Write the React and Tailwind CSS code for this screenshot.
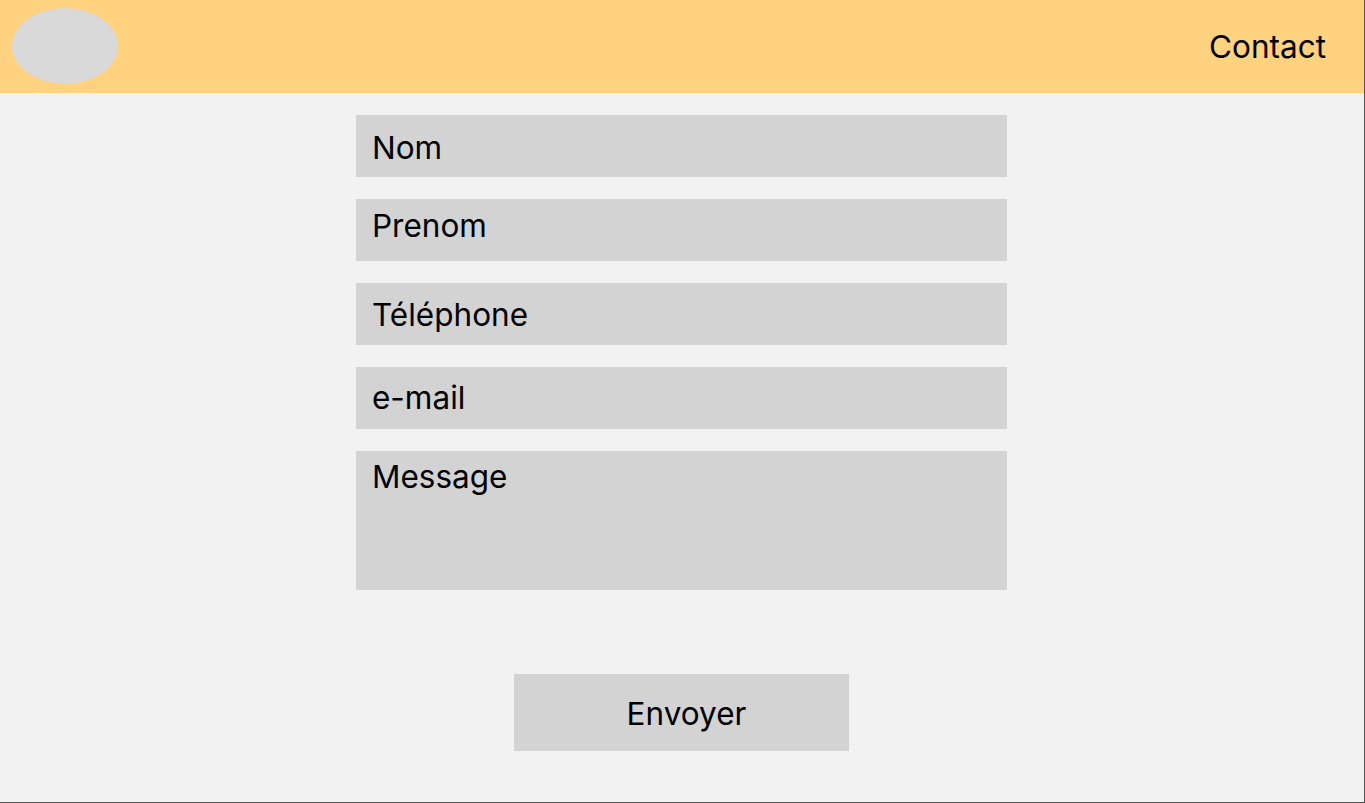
import React from 'react';

const fields = [
  { label: 'Nom', pad: 'pt-[17px]', h: 'h-[62px]' },
  { label: 'Prenom', pad: 'pt-[11px]', h: 'h-[62px]' },
  { label: 'Téléphone', pad: 'pt-[16px]', h: 'h-[62px]' },
  { label: 'e-mail', pad: 'pt-[15px]', h: 'h-[62px]' },
  { label: 'Message', pad: 'pt-[10px]', h: 'h-[139px]' },
];

export default function App() {
  return (
    <div className="h-[803px] w-full bg-[#f2f2f2] border-r border-b border-[#555555] font-['Inter',sans-serif] text-black flex flex-col">
      {/* Header */}
      <header className="h-[93px] shrink-0 bg-[#ffd280] flex items-center justify-between pl-[12px] pr-[38px]">
        <div className="w-[106px] h-[76px] -mt-[1px] rounded-[50%] bg-[#d9d9d9]" />
        <span className="text-[31.5px] leading-none pt-[1px]">Contact</span>
      </header>

      {/* Form */}
      <main className="flex flex-col items-center pt-[22px] pr-[1px]">
        <div className="flex flex-col gap-[22px]">
          {fields.map(f => (
            <div key={f.label} className={`w-[651px] ${f.h} ${f.pad} px-[16px] bg-[#d3d3d3] text-[31.5px] leading-none`}>
              {f.label}
            </div>
          ))}
        </div>
        <button className="mt-[84px] w-[335px] h-[77px] pt-[3px] pl-[10px] bg-[#d3d3d3] text-[31.5px] leading-none flex items-center justify-center">
          Envoyer
        </button>
      </main>
    </div>
  );
}
